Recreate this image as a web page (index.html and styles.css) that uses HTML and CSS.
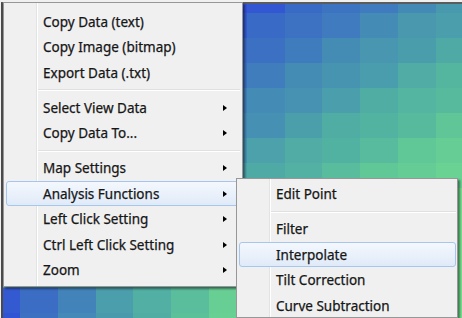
FILE: index.html
```html
<!DOCTYPE html>
<html lang="en">
<head>
  <meta charset="UTF-8" />
  <title>Map context menu</title>
  <link rel="stylesheet" href="styles.css">
</head>
<body>

  <div class="plot">
    <div class="heatmap" id="heatmap"></div>
  </div>

  <div class="menu main-menu">
    <div class="item">Copy Data (text)</div>
    <div class="item">Copy Image (bitmap)</div>
    <div class="item">Export Data (.txt)</div>
    <div class="sep"></div>
    <div class="item sub">Select View Data</div>
    <div class="item sub">Copy Data To...</div>
    <div class="sep"></div>
    <div class="item sub">Map Settings</div>
    <div class="item sub hot">Analysis Functions</div>
    <div class="item sub">Left Click Setting</div>
    <div class="item sub">Ctrl Left Click Setting</div>
    <div class="item sub">Zoom</div>
  </div>

  <div class="menu sub-menu">
    <div class="item">Edit Point</div>
    <div class="sep"></div>
    <div class="item">Filter</div>
    <div class="item hot">Interpolate</div>
    <div class="item">Tilt Correction</div>
    <div class="item">Curve Subtraction</div>
  </div>

  <script>
    const heatmap = document.getElementById("heatmap");
    const stops = [
      [0.00, [48, 80, 216]],
      [0.15, [58, 108, 196]],
      [0.30, [66, 132, 186]],
      [0.45, [74, 156, 172]],
      [0.60, [82, 178, 162]],
      [0.75, [94, 196, 152]],
      [0.90, [108, 212, 146]],
      [1.00, [120, 224, 144]]
    ];

    function colorAt(t) {
      t = Math.max(0, Math.min(1, t));
      for (let i = 1; i < stops.length; i++) {
        if (t <= stops[i][0]) {
          const [t0, a] = stops[i - 1];
          const [t1, b] = stops[i];
          const k = (t - t0) / (t1 - t0);
          const c = a.map((v, j) => Math.round(v + (b[j] - v) * k));
          return `rgb(${c[0]},${c[1]},${c[2]})`;
        }
      }
      return "rgb(120,224,144)";
    }

    // rough surface: top right rises to the bottom right, bottom row rises to the right
    for (let r = 0; r < 14; r++) {
      for (let c = 0; c < 14; c++) {
        let t;
        if (r >= 12) t = 0.04 + 0.135 * c;
        else t = 0.05 + 0.072 * (c - 7) + 0.07 * r;
        t += Math.sin(r * 2.3 + c * 1.7) * 0.02;
        const cell = document.createElement("div");
        cell.style.background = colorAt(t);
        heatmap.appendChild(cell);
      }
    }
  </script>
</body>
</html>
```

FILE: styles.css
```css
body {
  margin: 0;
  width: 462px;
  height: 318px;
  overflow: hidden;
  position: relative;
  background: #f0f0f0;
  font-family: "Noto Sans", "Open Sans", sans-serif;
}

.plot {
  box-sizing: border-box;
  height: 316px;
  margin: 2px 0 0 1px;
  border-top: 2px solid #5c5c5c;
  border-left: 2px solid #4a4a4a;
  overflow: hidden;
}

.heatmap {
  display: grid;
  grid-template-columns: repeat(14, 37.8px);
  grid-auto-rows: 25px;
  margin: -16px 0 0 -20.8px;
}

.menu {
  position: absolute;
  box-sizing: border-box;
  background-color: #f0f0f0;
  background-image: linear-gradient(to right,
    transparent 32px, #e2e3e3 32px, #e2e3e3 33px,
    #ffffff 33px, #ffffff 34px, transparent 34px);
  border: 1px solid #979797;
  box-shadow: 2px 2px 2px rgba(0, 0, 0, 0.45);
  overflow: hidden;
}

.main-menu {
  left: 3px;
  top: 2px;
  width: 240px;
  height: 285px;
  padding: 5.75px 2px 0 2px;
}

.sub-menu {
  left: 236px;
  top: 178px;
  width: 222px;
  height: 140px;
  padding: 2.25px 1px 0 2px;
}

.item {
  box-sizing: border-box;
  height: 25.5px;
  display: flex;
  align-items: center;
  padding: 0 0 0 36px;
  border: 1px solid transparent;
  border-radius: 3px;
  font-size: 13.5px;
  color: #161616;
  -webkit-text-stroke: 0.25px #161616;
  white-space: nowrap;
}

.item.sub::after {
  content: "";
  margin: 0 12px 0 auto;
  border-left: 4px solid #000;
  border-top: 3.5px solid transparent;
  border-bottom: 3.5px solid transparent;
}

.hot {
  border-color: #a4c6ef;
  background: linear-gradient(to bottom, #f4f8fd, #e0eaf8);
}

.sep {
  height: 9.5px;
  margin-left: 32px;
  display: flex;
  align-items: center;
}

.sep::before {
  content: "";
  flex: 1;
  height: 0;
  border-top: 1px solid #e0e0e0;
  border-bottom: 1px solid #ffffff;
}
```
